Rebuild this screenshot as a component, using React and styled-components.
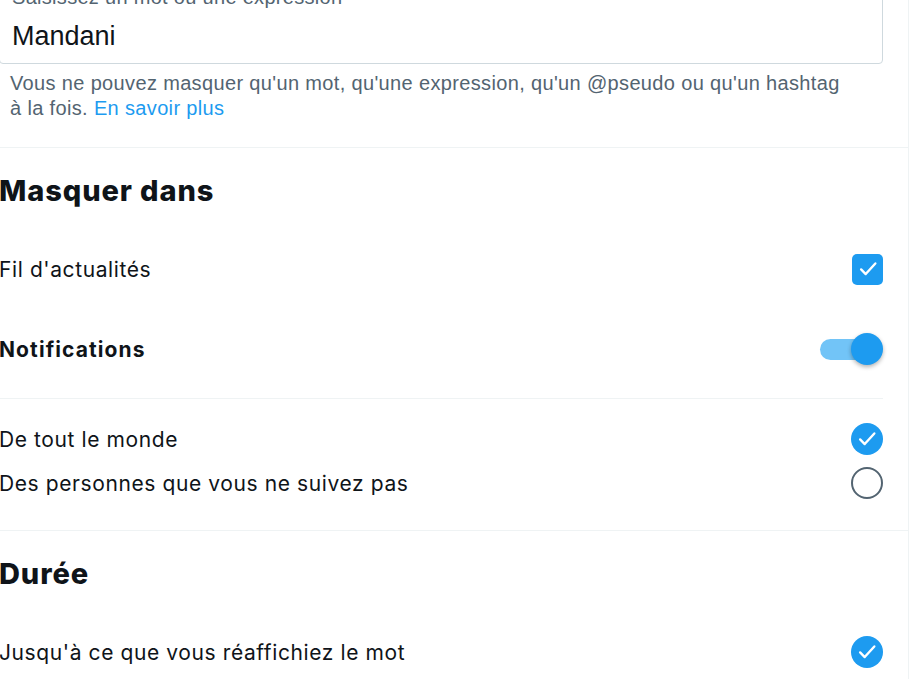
import React from "react";
import styled, { createGlobalStyle } from "styled-components";

const GlobalStyle = createGlobalStyle`
  html, body {
    margin: 0;
    padding: 0;
    background: #ffffff;
    overflow: hidden;
  }
  body {
    font-family: Inter, "Noto Sans", Roboto, sans-serif;
    color: #0f1419;
  }
`;

const Panel = styled.div`
  width: 910px;
  margin-left: -1px;
  margin-top: -22px;
  border-right: 1px solid #eff3f4;
  min-height: 720px;
  box-sizing: border-box;
`;

const Section = styled.section`
  border-bottom: 1px solid #eff3f4;
  padding: ${(p) => p.$pad || "0"};
`;

const Inner = styled.div`
  padding-right: 25px;
`;

const InputBox = styled.div`
  height: 86px;
  box-sizing: border-box;
  border: 1px solid #cfd9de;
  border-radius: 4px;
  padding: 6px 12px 0;
  display: flex;
  flex-direction: column;
  font-family: "Liberation Sans", Arial, sans-serif;
`;

const InputLabel = styled.div`
  font-size: 20px;
  line-height: 24px;
  color: #536471;
  letter-spacing: 0.3px;
`;

const InputValue = styled.div`
  font-size: 27px;
  line-height: 34px;
  margin-top: 10px;
  color: #0f1419;
`;

const Hint = styled.p`
  margin: 0;
  padding: 7px 12px 26px 11px;
  font-family: "Liberation Sans", Arial, sans-serif;
  font-size: 20px;
  line-height: 25px;
  color: #536471;
  letter-spacing: 0.35px;
  white-space: nowrap;
`;

const Link = styled.a`
  color: #1d9bf0;
  text-decoration: none;
`;

const Heading = styled.h2`
  margin: 0 0 31px;
  font-size: 29px;
  line-height: 32px;
  font-weight: 800;
  letter-spacing: 0.9px;
`;

const Row = styled.div`
  height: ${(p) => p.$h || 62}px;
  display: flex;
  align-items: center;
  justify-content: space-between;
  font-size: 21px;
  letter-spacing: ${(p) => (p.$bold ? "1.1px" : "0.6px")};
  font-weight: ${(p) => (p.$bold ? 700 : 400)};
`;

const Divider = styled.div`
  height: 1px;
  background: #eff3f4;
`;

const RadioGroup = styled.div`
  padding: 18px 0 25px;
`;

const CheckBox = styled.span`
  width: 31px;
  height: 31px;
  border-radius: 5px;
  background: #1d9bf0;
  display: flex;
  align-items: center;
  justify-content: center;
`;

const Radio = styled.span`
  width: 32px;
  height: 32px;
  box-sizing: border-box;
  border-radius: 50%;
  background: ${(p) => (p.$on ? "#1d9bf0" : "transparent")};
  border: ${(p) => (p.$on ? "none" : "2.5px solid #536471")};
  display: flex;
  align-items: center;
  justify-content: center;
`;

const Toggle = styled.span`
  position: relative;
  width: 63px;
  height: 32px;
  display: flex;
  align-items: center;
`;

const Track = styled.span`
  width: 52px;
  height: 21px;
  border-radius: 11px;
  background: #72c4f7;
`;

const Knob = styled.span`
  position: absolute;
  right: 0;
  top: 0;
  width: 32px;
  height: 32px;
  border-radius: 50%;
  background: #1d9bf0;
  box-shadow: 0 2px 4px rgba(0, 0, 0, 0.3);
`;

const Check = ({ size = 18 }) => (
  <svg width={size} height={size} viewBox="0 0 24 24" fill="none">
    <path
      d="M4.5 12.5l5 5L20 6"
      stroke="#ffffff"
      strokeWidth="2.6"
      strokeLinecap="round"
      strokeLinejoin="round"
    />
  </svg>
);

export default function App() {
  return (
    <>
      <GlobalStyle />
      <Panel>
        <Section>
          <Inner>
            <InputBox>
              <InputLabel>Saisissez un mot ou une expression</InputLabel>
              <InputValue>Mandani</InputValue>
            </InputBox>
            <Hint>
              Vous ne pouvez masquer qu'un mot, qu'une expression, qu'un @pseudo
              ou qu'un hashtag
              <br />à la fois. <Link href="#">En savoir plus</Link>
            </Hint>
          </Inner>
        </Section>

        <Section $pad="27px 0 0">
          <Inner>
            <Heading>Masquer dans</Heading>
            <Row $h={62}>
              <span>Fil d'actualités</span>
              <CheckBox>
                <Check size={22} />
              </CheckBox>
            </Row>
            <Row $h={98} $bold>
              <span>Notifications</span>
              <Toggle>
                <Track />
                <Knob />
              </Toggle>
            </Row>
            <Divider />
            <RadioGroup>
              <Row $h={44}>
                <span>De tout le monde</span>
                <Radio $on>
                  <Check size={22} />
                </Radio>
              </Row>
              <Row $h={44}>
                <span>Des personnes que vous ne suivez pas</span>
                <Radio />
              </Row>
            </RadioGroup>
          </Inner>
        </Section>

        <Section $pad="27px 0 0">
          <Inner>
            <Heading>Durée</Heading>
            <Row $h={62}>
              <span>Jusqu'à ce que vous réaffichiez le mot</span>
              <Radio $on>
                <Check size={22} />
              </Radio>
            </Row>
          </Inner>
        </Section>
      </Panel>
    </>
  );
}
